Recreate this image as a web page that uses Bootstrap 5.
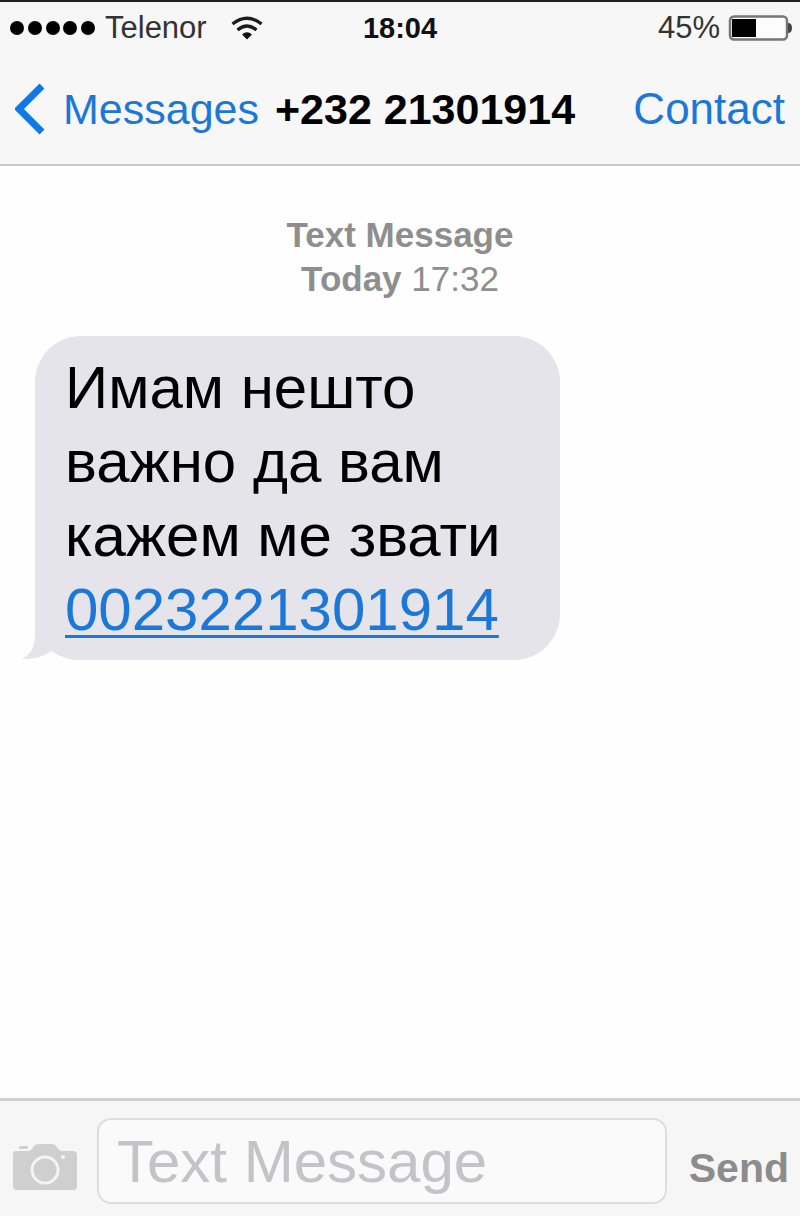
<!DOCTYPE html>
<html lang="en">
<head>
<meta charset="utf-8">
<meta name="viewport" content="width=device-width, initial-scale=1">
<title>Messages</title>
<link href="https://cdn.jsdelivr.net/npm/bootstrap@5.3.0/dist/css/bootstrap.min.css" rel="stylesheet">
<style>
  body { font-family: "Liberation Sans", Arial, sans-serif; background: #fefefe; color: #000; }
  .top-area { background: #f7f7f7; border-top: 2px solid #231f20; border-bottom: 2px solid #cacaca; }
  .status-row { height: 52px; padding: 0 8px; font-size: 31px; line-height: 36px; color: #333; }
  .clock { font-size: 29px; color: #111; }
  .title-row { height: 110px; padding: 0 15px; font-size: 43px; line-height: 52px; }
  .title-row a, .bubble a { color: #1c78d8; }
  .back-link { gap: 16px; margin-right: 16px; }
  .peer { font-size: 43px; line-height: 52px; }
  .title-row .contact-link { font-size: 44px; }
  .stamp { margin-top: 47px; font-size: 35px; line-height: 44px; color: #8e8e8e; }
  .bubble { position: relative; width: fit-content; max-width: 525px; margin: 35px 0 0 35px; padding: 15px 30px 13px; border-radius: 46px; background: #e5e4ea; font-size: 60px; line-height: 74px; }
  .bubble p { min-width: 465px; }
  .bubble a { text-decoration-thickness: 3px; text-underline-offset: 5px; text-decoration-skip-ink: none; }
  .tail { position: absolute; left: -13px; bottom: 0; }
  .compose { background: #f6f6f6; border-top: 3px solid #d0d0d0; padding: 17px 11px 12px 13px; }
  .compose .form-control { height: 86px; margin: 0 22px 0 20px; padding: 0 18px; border: 2px solid #dedede; border-radius: 14px; background: #fafafa; font-size: 60px; line-height: 72px; }
  .compose .form-control::placeholder { color: #c4c4c6; opacity: 1; }
  .send { font-size: 41px; line-height: 48px; color: #8c8c8c; padding: 14px 0 0; }
  .camera { padding: 12px 0 0; }
</style>
</head>
<body class="d-flex flex-column min-vh-100">
<header class="top-area">
  <div class="status-row d-flex align-items-center">
    <div class="d-flex align-items-center flex-fill w-25">
      <svg width="97" height="18" viewBox="0 0 97 18" aria-hidden="true"><g fill="#000"><circle cx="9" cy="9" r="7"/><circle cx="27" cy="9" r="7"/><circle cx="45" cy="9" r="7"/><circle cx="62" cy="9" r="7"/><circle cx="80" cy="9" r="7"/></g></svg>
      <span>Telenor</span>
      <svg class="ms-4" width="32" height="24" viewBox="0 0 32 24" aria-hidden="true"><g fill="none" stroke="#1c1c1c" stroke-width="3.2"><path d="M1.500 8Q16-3.500 30.500 8"/><path d="M6.500 14Q16 6 25.500 14"/></g><path d="M11 18.500Q16 14 21 18.500L16 23.500Z" fill="#111"/></svg>
    </div>
    <time class="clock fw-bold">18:04</time>
    <div class="d-flex align-items-center justify-content-end flex-fill w-25">
      <span class="me-2">45%</span>
      <svg width="64" height="26" viewBox="0 0 64 26" aria-hidden="true"><rect x="2" y="1.500" width="57" height="23" rx="4" fill="#fcfcfc" stroke="#777" stroke-width="2.500"/><rect x="4" y="4" width="24" height="18" fill="#000"/><path d="M60 8q4 0 4 5t-4 5z" fill="#444"/></svg>
    </div>
  </div>
  <nav class="title-row d-flex align-items-center" aria-label="Conversation">
    <a href="#" class="back-link d-flex align-items-center text-decoration-none">
      <svg width="32" height="52" viewBox="0 0 32 52" aria-hidden="true"><path d="M27 3L4 26L27 49" fill="none" stroke="#0f79e6" stroke-width="7"/></svg>
      <span>Messages</span>
    </a>
    <h1 class="peer fw-bold m-0">+232 21301914</h1>
    <a href="#" class="contact-link ms-auto text-decoration-none">Contact</a>
  </nav>
</header>
<main class="flex-grow-1">
  <div class="stamp text-center"><b>Text Message</b><br><b>Today</b> 17:32</div>
  <div class="bubble" lang="sr">
    <svg class="tail" width="60" height="46" viewBox="0 0 60 46" aria-hidden="true"><path d="M13 0V24Q12 39 0 45Q17 46 29 37Q42 46 59 46V0Z" fill="#e5e4ea"/></svg>
    <p class="position-relative m-0">Имам нешто<br>важно да вам<br>кажем ме звати<br><a href="tel:0023221301914">0023221301914</a></p>
  </div>
</main>
<footer>
  <form class="compose d-flex align-items-center">
    <button type="button" class="camera btn border-0" aria-label="Camera">
      <svg class="d-block" width="64" height="48" viewBox="0 0 64 48"><path d="M3 8H16Q19 7 21 3Q22 1 26 1H38Q42 1 43 3Q45 7 48 8H60Q64 8 64 12V43Q64 47 60 47H4Q0 47 0 43V11Q0 8 3 8Z" fill="#cfcfcf"/><rect x="6" y="3" width="9" height="3" rx="1" fill="#cfcfcf"/><circle cx="32" cy="27" r="13" fill="none" stroke="#f4f4f4" stroke-width="3"/><circle cx="50" cy="14" r="2" fill="#f4f4f4"/></svg>
    </button>
    <input type="text" class="form-control" placeholder="Text Message" aria-label="Text Message">
    <button type="button" class="send btn border-0 fw-bold">Send</button>
  </form>
</footer>
<script src="https://cdn.jsdelivr.net/npm/bootstrap@5.3.0/dist/js/bootstrap.bundle.min.js"></script>
</body>
</html>
